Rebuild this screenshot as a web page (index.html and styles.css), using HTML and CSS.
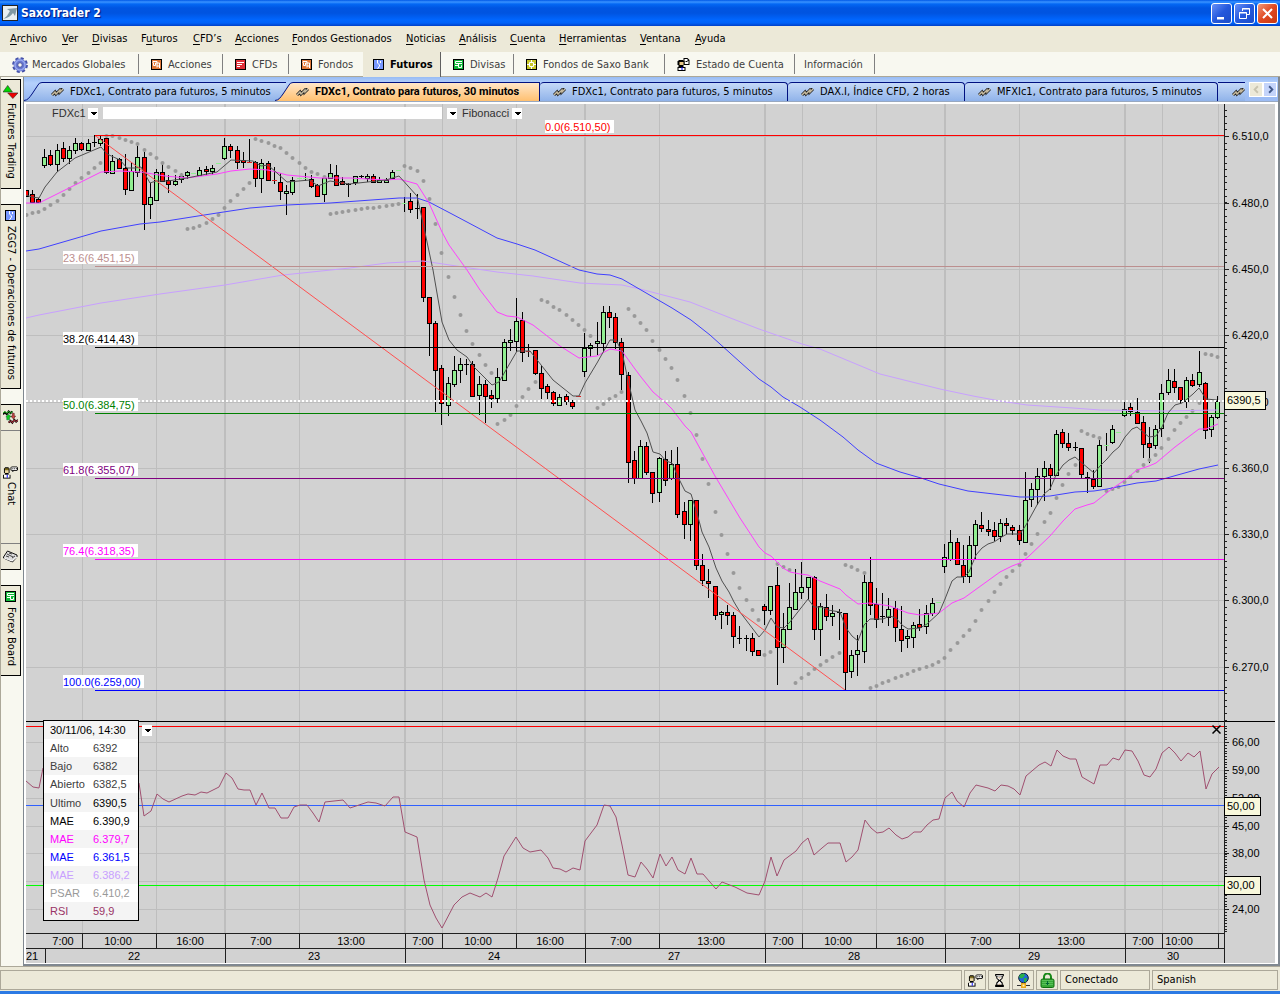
FILE: index.html
```html
<!DOCTYPE html>
<html lang="es">
<head>
<meta charset="utf-8">
<title>SaxoTrader 2</title>
<link rel="stylesheet" href="styles.css">
</head>
<body>
<svg class="defs" aria-hidden="true">
  <defs>
    <linearGradient id="tabBlue" x1="0" y1="0" x2="0" y2="1"><stop offset="0" stop-color="#c5d9f7"/><stop offset="1" stop-color="#90b3ea"/></linearGradient>
    <linearGradient id="tabOrange" x1="0" y1="0" x2="0" y2="1"><stop offset="0" stop-color="#ffe6c8"/><stop offset="1" stop-color="#ffc070"/></linearGradient>
  </defs>
  <symbol id="i-chart" viewBox="0 0 13 9"><path d="M1 7L4 4L5 6L9 2L9 4L12 1" fill="none" stroke="#222" stroke-width="3"/><path d="M1 7L4 4L5 6L9 2L9 4L12 1" fill="none" stroke="#c8bca0" stroke-width="1.4"/></symbol>
  <symbol id="i-gear" viewBox="0 0 16 16"><circle cx="8" cy="8" r="6.4" fill="none" stroke="#4450a8" stroke-width="3" stroke-dasharray="2.9 2.1"/><circle cx="8" cy="8" r="4.4" fill="none" stroke="#6878d0" stroke-width="4"/><circle cx="8" cy="8" r="5" fill="none" stroke="#98a8ee" stroke-width="1.4"/><circle cx="8" cy="8" r="2.3" fill="#f8f8f0" stroke="#3c48a0"/></symbol>
  <symbol id="i-orange" viewBox="0 0 11 11"><path d="M0 0h11v11H0z" fill="#000"/><path d="M1 1h9v9H1z" fill="#e07838"/><path d="M2 4V2.5H6V8.500M2.500 4v2.500H4.500V4H8.500V7H6M8.500 7v2" fill="none" stroke="#fff"/></symbol>
  <symbol id="i-red" viewBox="0 0 11 11"><path d="M0 0h11v11H0z" fill="#000"/><path d="M1 1h9v9H1z" fill="#e03038"/><path d="M2 3h7v1H2zM2 5h5v1H2zM2 7h3v1H2z" fill="#fff"/></symbol>
  <symbol id="i-blue" viewBox="0 0 11 11"><path d="M0 0h11v11H0z" fill="#000"/><path d="M1 1h9v9H1z" fill="#7898ff"/><path d="M4.500 1V4L6.500 6V7L4.500 10M7.500 2v2" fill="none" stroke="#fff"/></symbol>
  <symbol id="i-green" viewBox="0 0 11 11"><path d="M0 0h11v11H0z" fill="#000"/><path d="M1 1h9v9H1z" fill="#10b838"/><path d="M9 2.500H2.500V4.500H9M2 6.500H5.500V8.500H8.500V6.500H9M5.500 4v3" fill="none" stroke="#fff"/></symbol>
  <symbol id="i-yellow" viewBox="0 0 11 11"><path d="M0 0h11v11H0z" fill="#000"/><path d="M1 1h9v9H1z" fill="#c8c828"/><path d="M4 3.500H7.500V7.500H3.500V3.500zM5.500 1v2M5.500 8v2M1 5.500h2M8 5.500h2" fill="none" stroke="#fff"/></symbol>
  <symbol id="i-account" viewBox="0 0 12 13"><path d="M6 0h4l2 2v5H6z" fill="#000"/><path d="M7 1h3v2h1v3H7z" fill="#fff"/><path d="M8 3h2v1H8z" fill="#000"/><path d="M1 2h5v1h1v4H6v2H1V7H0V3h1z" fill="#000"/><path d="M2 4h4v3H2z" fill="#e8c888"/><path d="M0 9h8v4H0z" fill="#000"/><path d="M1 10h6v2H1z" fill="#fff"/><path d="M4 9h1v3H4z" fill="#00f"/></symbol>
  <symbol id="i-chat" viewBox="0 0 16 13"><path d="M9 0h6v1h1v3h-1v1h-4v1h-1V5H9V4H8V1h1z" fill="#000"/><path d="M9 1h6v3H9z" fill="#fff"/><path d="M10 2h1v1h-1zM12 2h1v1h-1zM14 2h1v1h-1z" fill="#000"/><path d="M2 1h4v1h1v5H6v2H2V7H1V2h1z" fill="#000"/><path d="M2 2h4v2H2z" fill="#807020"/><path d="M2 4h4v3H2z" fill="#ecd8a0"/><path d="M0 9h8v4H0z" fill="#000"/><path d="M1 9h6v3H1z" fill="#fff"/><path d="M4 9h1v3H4z" fill="#00f"/></symbol>
  <symbol id="i-updown" viewBox="0 0 16 15"><path d="M0 8L5 1L10 8z" fill="#00d800" stroke="#222" stroke-width=".6"/><path d="M5 9h11L10.500 15z" fill="#f00000" stroke="#222" stroke-width=".6"/></symbol>
  <symbol id="i-trade" viewBox="0 0 16 15"><path d="M0 4l2-2 2 2 2-3 2 2 2-2" fill="none" stroke="#000" stroke-width="2"/><path d="M0 3l2-2 2 2 2-2 2 2 2-2" fill="none" stroke="#2d2"/><path d="M6 13l2-2 2 2 2-3 2 2 2-2" fill="none" stroke="#000" stroke-width="2"/><path d="M6 13l2-2 2 2 2-3 2 2 2-2" fill="none" stroke="#e04050"/><path d="M4 10V7H3l3-3 3 3H7v3z" fill="#1c2" stroke="#063" stroke-width=".5"/><path d="M10 3h2v3h1.500L11 9 8.500 6H10z" fill="#c44" stroke="#300" stroke-width=".5"/></symbol>
  <symbol id="i-news" viewBox="0 0 15 13"><path d="M0.500 7L4.500 1l9.500 4v2l-4.500 5-9-4z" fill="#ddd" stroke="#111"/><path d="M4 4l6 3M3 6l3 1M6 3l3 1M9 8l3-2" stroke="#444"/><path d="M1 8l8 3 5-4" fill="none" stroke="#fff"/></symbol>
  <symbol id="i-hour" viewBox="0 0 8 12"><path d="M0 0h8v2H7v2L5 6l2 2v2h1v2H0v-2h1V8l2-2-2-2V2H0z" fill="#000"/><path d="M1 1h6v0.500H1zM2 2h4v2L4 5.500 2 4zM4 6.500L6 8.500V10H2V8.500z" fill="#fff"/><path d="M3 9h2v1H3zM3 3h2v1H3z" fill="#c8a070"/></symbol>
  <symbol id="i-net" viewBox="0 0 13 15"><circle cx="6.500" cy="5" r="4.800" fill="#2068d8" stroke="#123"/><path d="M3 1.500l4-1 1 2-3 3-3-1zM7 5l3 0-1 4-2 0z" fill="#28b048"/><path d="M0 12h13v1H0z" fill="#333"/><path d="M4 10h5v5H4z" fill="#e8a818"/><path d="M5.500 11.500h2v2h-2z" fill="#fff8c0"/></symbol>
  <symbol id="i-lock" viewBox="0 0 14 15"><path d="M3.500 7V4a3.500 3.500 0 0 1 7 0v3" fill="none" stroke="#188818" stroke-width="2"/><rect x="0.500" y="6" width="13" height="8.500" rx="1.500" fill="#38a838" stroke="#107010"/><path d="M1.500 7.500h11M1.500 9.500h11M1.500 11.500h11" stroke="#70d070" stroke-width=".6"/><path d="M6.500 8h1v4h-1zM5.500 10h3v1h-3z" fill="#063"/></symbol>
  <symbol id="i-down" viewBox="0 0 11 11"><path d="M3 4h6v1H8v1H7v1H5V6H4V5H3z" fill="#000"/></symbol>
</svg>

<header class="titlebar">
  <svg class="app-icon" width="16" height="16" viewBox="0 0 16 16"><path d="M0 0h16v16H0z" fill="#222"/><path d="M1 1h14v14H1z" fill="#e8eef2"/><path d="M1 14C5 12 6 9 8 6L5 4l10-1-2 8-2-3c-2 3-5 5-10 6z" fill="#8098a4"/></svg>
  <h1>SaxoTrader 2</h1>
  <div class="win-buttons">
    <button class="win" aria-label="Minimizar"><svg width="17" height="17" viewBox="0 0 17 17"><path d="M4 12h7v2.500H4z" fill="#fff"/></svg></button>
    <button class="win" aria-label="Restaurar"><svg width="17" height="17" viewBox="0 0 17 17"><path d="M6.500 6V3.500h7v6H11M6 4h8M3.500 7.500h7v6h-7zM3 8h8" fill="none" stroke="#fff"/></svg></button>
    <button class="win close" aria-label="Cerrar"><svg width="17" height="17" viewBox="0 0 17 17"><path d="M4 4l9 9M13 4l-9 9" stroke="#fff" stroke-width="2"/></svg></button>
  </div>
</header>

<nav class="menu">
  <button><u>A</u>rchivo</button><button><u>V</u>er</button><button><u>D</u>ivisas</button><button>F<u>u</u>turos</button><button><u>C</u>FD’s</button><button><u>A</u>cciones</button><button><u>F</u>ondos Gestionados</button><button><u>N</u>oticias</button><button><u>A</u>nálisis</button><button><u>C</u>uenta</button><button><u>H</u>erramientas</button><button><u>V</u>entana</button><button><u>A</u>yuda</button>
</nav>

<nav class="modules">
  <button><svg class="ic16"><use href="#i-gear"/></svg>Mercados Globales</button>
  <button><svg class="ic11"><use href="#i-orange"/></svg>Acciones</button>
  <button><svg class="ic11"><use href="#i-red"/></svg>CFDs</button>
  <button class="before"><svg class="ic11"><use href="#i-orange"/></svg>Fondos</button>
  <button class="on"><svg class="ic11"><use href="#i-blue"/></svg>Futuros</button>
  <button><svg class="ic11"><use href="#i-green"/></svg>Divisas</button>
  <button><svg class="ic11"><use href="#i-yellow"/></svg>Fondos de Saxo Bank</button>
  <button><svg class="ic13"><use href="#i-account"/></svg>Estado de Cuenta</button>
  <button>Información</button>
</nav>

<div class="work">
  <aside class="side">
    <button class="dock d1"><svg class="ic15"><use href="#i-updown"/></svg><span>Futures Trading</span></button>
    <button class="dock d2"><svg class="ic11"><use href="#i-blue"/></svg><span>ZGG7 - Operaciones de futuros</span></button>
    <div class="dock-group">
      <button class="small" aria-label="Operar"><svg class="ic15"><use href="#i-trade"/></svg></button>
      <button class="chat"><svg class="ic15"><use href="#i-chat"/></svg><span>Chat</span></button>
      <button class="small" aria-label="Noticias"><svg class="ic15"><use href="#i-news"/></svg></button>
    </div>
    <button class="dock d4"><svg class="ic11"><use href="#i-green"/></svg><span>Forex Board</span></button>
  </aside>

  <main class="frame">
    <div class="tabs">
      <button class="tab first"><svg class="slant" viewBox="0 0 20 19"><path d="M0 19C4 18 5 16 8 12L14 3Q15 0.500 18 0.500H20V19z" fill="url(#tabBlue)"/><path d="M0 18.500C4 18 5 16 8 12L14 3Q15 0.500 18 0.500H20" fill="none" stroke="#001080"/></svg><span class="face"><svg class="ic-chart"><use href="#i-chart"/></svg>FDXc1, Contrato para futuros, 5 minutos</span></button>
      <button class="tab on"><svg class="slant" viewBox="0 0 20 19"><path d="M0 19C4 18 5 16 8 12L14 3Q15 0.500 18 0.500H20V19z" fill="url(#tabOrange)"/><path d="M0 18.500C4 18 5 16 8 12L14 3Q15 0.500 18 0.500H20" fill="none" stroke="#001080"/></svg><span class="face"><svg class="ic-chart"><use href="#i-chart"/></svg>FDXc1, Contrato para futuros, 30 minutos</span></button>
      <button class="tab t3"><span class="face"><svg class="ic-chart"><use href="#i-chart"/></svg>FDXc1, Contrato para futuros, 5 minutos</span></button>
      <button class="tab t4"><span class="face"><svg class="ic-chart"><use href="#i-chart"/></svg>DAX.I, Índice CFD, 2 horas</span></button>
      <button class="tab t5"><span class="face"><svg class="ic-chart"><use href="#i-chart"/></svg>MFXIc1, Contrato para futuros, 5 minutos</span></button>
      <button class="tab t6" aria-label="Siguiente gráfico"><span class="face"><svg class="ic-chart"><use href="#i-chart"/></svg></span></button>
      <div class="scroll">
        <button disabled aria-label="Anterior"><svg width="13" height="13" viewBox="0 0 14 13"><path d="M8.500 3L5 6.500L8.500 10" fill="none" stroke="#c8c4b0" stroke-width="2"/></svg></button><button aria-label="Siguiente"><svg width="13" height="13" viewBox="0 0 14 13"><path d="M5.500 3L9 6.500L5.500 10" fill="none" stroke="#405888" stroke-width="2"/></svg></button>
      </div>
    </div>
    <div class="chart">
      <svg id="plot" viewBox="26 104 1249 859" role="img" aria-label="FDXc1, 30 minutos"></svg>
      <div class="tools">
        <label for="symbol">FDXc1</label>
        <button class="drop" aria-label="Elegir símbolo"><svg class="ic11"><use href="#i-down"/></svg></button>
        <input id="symbol" type="text">
        <button class="drop" aria-label="Historial"><svg class="ic11"><use href="#i-down"/></svg></button>
        <span class="study">Fibonacci</span>
        <button class="drop" aria-label="Elegir estudio"><svg class="ic11"><use href="#i-down"/></svg></button>
      </div>
      <div class="readout">
        <table>
          <thead><tr><th colspan="2">30/11/06, 14:30</th></tr></thead>
          <tbody>
            <tr><th>Alto</th><td>6392</td></tr>
            <tr><th>Bajo</th><td>6382</td></tr>
            <tr><th>Abierto</th><td>6382,5</td></tr>
            <tr class="last"><th>Ultimo</th><td class="k">6390,5</td></tr>
            <tr class="k"><th>MAE</th><td>6.390,9</td></tr>
            <tr class="magenta"><th>MAE</th><td>6.379,7</td></tr>
            <tr class="blue"><th>MAE</th><td>6.361,5</td></tr>
            <tr class="lilac"><th>MAE</th><td>6.386,2</td></tr>
            <tr class="gray"><th>PSAR</th><td>6.410,2</td></tr>
            <tr class="plum"><th>RSI</th><td>59,9</td></tr>
          </tbody>
        </table>
        <button class="drop" aria-label="Opciones"><svg class="ic11"><use href="#i-down"/></svg></button>
      </div>
      <button class="close-study" aria-label="Cerrar RSI"><svg width="9" height="9" viewBox="0 0 9 9"><path d="M0.500 0.500l8 8M8.500 0.500l-8 8" stroke="#000" stroke-width="1.500"/></svg></button>
    </div>
  </main>
</div>

<footer class="status">
  <div class="cell grow"></div>
  <div class="cell icon"><svg class="ic15"><use href="#i-chat"/></svg></div>
  <div class="cell icon"><svg class="ic13"><use href="#i-hour"/></svg></div>
  <div class="cell icon"><svg class="ic15"><use href="#i-net"/></svg></div>
  <div class="cell icon"><svg class="ic15"><use href="#i-lock"/></svg></div>
  <div class="cell link">Conectado</div>
  <div class="cell lang">Spanish</div>
</footer>
<script src="chart.js"></script>
</body>
</html>
```
FILE: styles.css
```css
* { box-sizing: border-box; }
body {
  margin: 0;
  min-height: 100vh;
  display: flex;
  flex-direction: column;
  background: #ece9d8;
  color: #000;
  font: 11px/14px "DejaVu Sans Condensed", "Noto Sans", sans-serif;
  overflow-x: hidden;
}
button {
  font: inherit;
  color: inherit;
  background: none;
  border: 0;
  padding: 0;
  margin: 0;
  white-space: nowrap;
}
svg { flex: none; }
.defs { position: absolute; width: 0; height: 0; }
.ic11 { width: 11px; height: 11px; }
.ic13 { width: 13px; height: 13px; }
.ic15 { width: 15px; height: 15px; }
.ic16 { width: 16px; height: 16px; }
.ic-chart { width: 13px; height: 9px; }

.titlebar {
  height: 26px;
  display: flex;
  align-items: center;
  gap: 3px;
  padding: 0 2px;
  background: linear-gradient(#0058e6 0, #3a93ff 2px, #0468f4 4px, #0055e2 8px, #0054e0 13px, #0066ff 20px, #0062f8 23px, #0040c8 26px);
}
.titlebar h1 {
  flex: 1;
  margin: 0;
  color: #fff;
  font: bold 12px/16px "DejaVu Sans Condensed", sans-serif;
  text-shadow: 1px 1px 1px #001880;
}
.win-buttons { display: flex; gap: 2px; }
.win {
  width: 21px;
  height: 21px;
  display: flex;
  align-items: center;
  justify-content: center;
  border: 1px solid #fff;
  border-radius: 3px;
  background: linear-gradient(135deg, #6890f8, #2458dc 50%, #1c4cc8);
}
.win.close { background: linear-gradient(135deg, #f09878, #e04820 50%, #c83810); }

.menu {
  height: 26px;
  display: grid;
  grid-template-columns: 52px 30px 49px 52px 42px 57px 114px 53px 51px 49px 81px 55px 50px;
  align-items: center;
  padding-left: 10px;
}
.menu button { text-align: left; }
.menu u { text-underline-offset: 2px; }

.modules {
  height: 25px;
  display: grid;
  grid-template-columns: 139px 84px 66px 74px 78px 73px 151px 130px 80px 1fr;
  background: #f8f8f0;
  color: #404040;
  border-bottom: 1px solid #aca899;
}
.modules button {
  position: relative;
  display: flex;
  align-items: center;
  gap: 6px;
  padding-left: 12px;
}
.modules button:first-child { gap: 4px; }
.modules button:last-child { padding-left: 9px; }
.modules button::after {
  content: "";
  position: absolute;
  right: 0;
  top: 2px;
  height: 20px;
  border-right: 1px solid #808080;
}
.modules .before::after { border-color: #f8f8f0; }
.modules .on {
  height: 25px;
  padding-left: 10px;
  background: #ece9d8;
  border-right: 1px solid #606060;
  color: #000;
  font-weight: bold;
}
.modules .on::after { display: none; }

.work {
  flex: 1;
  display: flex;
  background: #f8f8f0;
  border-bottom: 1px solid #aca899;
}
.side {
  width: 23px;
  flex: none;
  display: flex;
  flex-direction: column;
  align-items: flex-start;
  gap: 15px;
  padding-top: 2px;
  border-left: 1px solid #aca899;
}
.dock, .dock-group {
  width: 20px;
  border: solid #000;
  border-width: 1px 1px 1px 0;
  background: #ece9d8;
}
.dock, .chat {
  display: flex;
  flex-direction: column;
  align-items: center;
  gap: 5px;
  padding-top: 5px;
}
.side span { writing-mode: vertical-rl; line-height: 18px; }
.d1 { height: 110px; padding-top: 4px; gap: 4px; }
.d2 { height: 185px; }
.d4 { height: 91px; }
.dock-group { height: 166px; display: flex; flex-direction: column; }
.small { width: 19px; height: 25px; display: grid; place-items: center; }
.chat {
  width: 19px;
  flex: 1;
  padding-top: 34px;
  gap: 2px;
  border: solid #808080;
  border-width: 1px 0;
}

.frame {
  flex: 1;
  min-width: 0;
  border: solid #808890;
  border-width: 0 2px 2px 1px;
  background: #fff;
  padding: 0 3px 1px 2px;
}
.tabs {
  display: flex;
  align-items: flex-end;
  height: 25px;
  margin: 0 -3px 0 -2px;
  background: linear-gradient(#98bcf4, #b4d0fc 6px, #9cbcf4 20px);
  border-bottom: 1px solid #98a8c0;
  overflow: hidden;
}
.tab { display: flex; flex: none; height: 19px; }
.slant { width: 20px; height: 19px; margin-right: -1px; }
.face {
  flex: 1;
  min-width: 0;
  display: flex;
  align-items: center;
  gap: 6px;
  height: 19px;
  border-top: 1px solid #001080;
  background: linear-gradient(#c5d9f7, #90b3ea);
}
.tab.first { width: 262px; }
.tab.first .face { padding-left: 8px; }
.tab.on {
  width: 265px;
  margin-left: -11px;
  z-index: 1;
  font-family: Roboto, "DejaVu Sans Condensed", sans-serif;
  font-weight: bold;
}
.tab.on .face { padding-left: 2px; background: linear-gradient(#ffe6c8, #ffc070); border-right: 1px solid #001080; }
.t3 .face, .t4 .face, .t5 .face {
  padding-left: 13px;
  border-right: 1px solid #001080;
  border-radius: 4px 4px 0 0;
}
.t6 .face { padding-left: 14px; }
.t3 { width: 248px; }
.t4 { width: 177px; }
.t5 { width: 253px; }
.t6 { width: 27px; }
.scroll { flex: 1; display: flex; align-self: center; padding-left: 4px; }
.scroll button { display: grid; background: #c4d4fa; border: 1px solid #fff; height: 15px; width: 14px; overflow: hidden; }
.scroll button:disabled { background: #ece9d8; }

.chart {
  position: relative;
  border-top: 2px solid #fff;
  font: 11px/14px "Liberation Sans", Arial, sans-serif;
}
#plot {
  display: block;
  width: 100%;
  height: auto;
  background: #d2d2d2;
  font: 11px "Liberation Sans", Arial, sans-serif;
}
#plot .mid { text-anchor: middle; }
.tools {
  position: absolute;
  left: 26px;
  top: 3px;
  height: 12px;
  display: flex;
  align-items: center;
  gap: 5px;
  color: #303030;
}
.drop { width: 10px; height: 11px; display: grid; place-items: center; background: #fff; }
.tools label { width: 31px; }
.tools input {
  width: 339px;
  height: 12px;
  border: 0;
  padding: 0;
  background: #fff;
  font: inherit;
}
.study { width: 45px; }
.readout {
  position: absolute;
  left: 17px;
  top: 616px;
  display: flex;
  align-items: flex-start;
  gap: 3px;
}
.readout .drop { margin-top: 5px; }
.readout table {
  width: 96px;
  border: 1px solid #000;
  border-collapse: separate;
  border-spacing: 0;
  background: #fff;
  color: #404040;
}
.readout tr { height: 18px; }
.readout thead tr { color: #000; }
.readout .last { height: 19px; }
.readout th, .readout td { padding: 0; font-weight: normal; text-align: left; }
.readout th { padding-left: 6px; width: 49px; }
.readout thead tr, .readout tbody tr:nth-child(even) { background: #f4f4f4; }
.readout .k { color: #000; }
.readout .magenta { color: #f0f; }
.readout .blue { color: #00f; }
.readout .lilac { color: #c8a0ff; }
.readout .gray { color: #999; }
.readout .plum { color: #993366; }
.close-study { position: absolute; right: 54px; top: 621px; display: grid; }

.status {
  display: flex;
  gap: 2px;
  padding: 3px 2px 1px 0;
  border-bottom: 4px solid #2c7ae4;
}
.cell {
  height: 20px;
  border: 1px solid #aca899;
  display: flex;
  align-items: center;
  padding-left: 4px;
}
.grow { flex: 1; }
.icon { width: 22px; padding: 0; justify-content: center; }
.link { width: 90px; }
.lang { width: 126px; }
```
FILE: chart.js
```javascript
const NS = 'http://www.w3.org/2000/svg';
const plot = document.getElementById('plot');
const RIGHT = 1224;

function add(tag, attrs, text) {
  const el = document.createElementNS(NS, tag);
  for (const name in attrs) el.setAttribute(name, attrs[name]);
  if (text) el.textContent = text;
  plot.appendChild(el);
}
const rect = (x, y, width, height, fill) => add('rect', { x, y, width, height, fill });
const line = (points, stroke) => add('polyline', { points, stroke, fill: 'none', 'stroke-width': 1 });
const label = (x, y, s, fill = '#000', cls = '') => add('text', { x, y, fill, class: cls }, s);

// One slot per half-hour bar.
const barX = k => Math.floor(44.7 + 6.207 * k);

// Grid
const priceRows = [136, 203, 269, 335, 402, 468, 534, 600, 667];
const rsiRows = [742, 770, 798, 826, 853, 881, 909];
priceRows.concat(rsiRows).forEach(y => rect(26, y, RIGHT - 26, 1, '#bebebe'));
const hours = [82, 156, 225, 299, 405, 442, 516, 585, 659, 765, 802, 876, 945, 1019, 1125, 1162, 1218];
const days = [45, 225, 405, 585, 765, 945, 1125];
hours.forEach(x => days.includes(x) ? rect(x - 1, 104, 2, 829, '#bebebe') : rect(x, 104, 1, 829, '#bebebe'));

// Bars: high, body top, body bottom, low, kind.
// g/r = rising/falling body, d = doji, G/R = flat tick.
const bars = {
  '-3': [[190,190,196,196,'r'],[190,194,202,202,'r'],[198,199,202,203,'r']],
  0: [[149,157,165,168,'g'],[150,155,164,166,'r'],[144,150,164,172,'g'],[142,148,158,162,'r'],[146,150,158,164,'g'],[138,143,150,154,'g'],[142,143,149,151,'r'],[139,143,150,151,'g'],[135,142,143,147,'d'],[136,139,143,146,'g'],[137,138,172,174,'r'],[155,161,173,173,'g'],[158,159,168,169,'r'],[154,168,189,195,'r'],[162,171,190,190,'g'],[146,157,172,177,'g'],[152,157,204,230,'r'],[183,197,204,219,'g'],[169,172,200,201,'g'],[164,172,181,181,'r'],[175,180,184,193,'r'],[175,181,184,186,'g'],[173,176,179,183,'g'],[171,172,175,179,'g'],[173,173,173,173,'G'],[167,170,175,175,'g'],[166,169,171,175,'r'],[165,168,171,175,'g'],[163,163,163,163,'G']],
  29: [[138,146,158,160,'g'],[144,146,150,158,'r'],[146,150,162,169,'r'],[152,160,162,168,'r'],[139,162,162,162,'R'],[161,162,178,187,'r'],[159,163,178,193,'g'],[161,163,180,181,'r'],[167,180,180,184,'R'],[173,182,191,200,'r'],[185,191,193,215,'g'],[177,180,192,195,'g'],[178,178,178,178,'G'],[173,178,178,181,'G'],[175,179,186,188,'r'],[184,185,196,196,'r'],[176,178,194,202,'g'],[164,173,178,178,'g'],[165,175,185,185,'r'],[177,181,184,185,'r'],[183,184,184,197,'d'],[176,176,182,185,'g'],[175,176,176,178,'d'],[174,176,178,182,'g'],[174,176,182,183,'r'],[177,180,182,183,'g'],[178,180,182,182,'g'],[170,172,178,178,'g'],[170,170,170,170,'G']],
  58: [[197,203,203,212,'G'],[193,201,209,213,'r'],[194,208,208,219,'d'],[207,207,297,302,'r'],[297,297,323,356,'r'],[321,323,370,412,'r'],[365,368,403,425,'r'],[377,383,405,416,'g'],[356,370,384,387,'g'],[358,364,370,383,'g'],[359,364,364,375,'d'],[361,364,396,397,'r'],[376,384,395,415,'g'],[380,384,396,423,'r'],[390,395,398,408,'r'],[368,377,398,403,'g'],[339,342,380,381,'g'],[329,340,342,351,'g'],[298,321,341,352,'g'],[312,320,352,362,'r'],[344,351,351,357,'R'],[350,350,373,375,'r'],[365,373,388,399,'r'],[384,386,392,399,'r'],[391,392,403,406,'r'],[394,397,405,406,'g'],[394,396,401,405,'r'],[400,402,406,409,'r'],[396,396,396,396,'R']],
  87: [[333,348,371,377,'g'],[343,345,348,357,'g'],[322,341,343,355,'g'],[306,312,343,352,'g'],[306,312,317,328,'r'],[313,317,342,349,'r'],[338,342,374,390,'r'],[372,375,462,483,'r'],[451,460,478,484,'r'],[440,446,478,478,'g'],[442,446,472,475,'r'],[472,472,493,503,'r'],[457,458,492,502,'g'],[451,459,480,486,'r'],[450,464,478,480,'g'],[447,464,514,518,'r'],[502,511,524,539,'r'],[500,500,524,541,'g'],[500,500,565,570,'r'],[554,565,580,586,'r'],[569,581,583,598,'r'],[586,586,615,620,'r'],[611,612,614,629,'g'],[605,612,615,625,'r'],[612,615,636,648,'r'],[626,638,639,644,'d'],[635,638,639,651,'d'],[633,638,651,656,'r'],[650,650,655,656,'r']],
  116: [[604,606,610,625,'r'],[586,586,610,615,'g'],[567,585,647,685,'r'],[613,629,647,663,'g'],[583,607,629,630,'g'],[569,592,609,610,'g'],[562,587,592,599,'g'],[577,577,587,599,'g'],[576,577,629,640,'r'],[603,606,629,656,'g'],[594,607,616,621,'r'],[605,613,616,626,'g'],[609,612,613,640,'d'],[613,613,672,690,'r'],[650,655,671,678,'g'],[635,650,654,676,'g'],[575,582,651,663,'g'],[557,582,605,615,'r'],[588,604,619,628,'r'],[593,616,617,623,'d'],[598,609,617,626,'g'],[601,608,627,642,'r'],[606,629,640,652,'r'],[630,636,638,648,'g'],[622,625,637,648,'g'],[609,624,627,631,'r'],[605,613,626,634,'g'],[598,603,613,616,'g'],[602,602,602,602,'G']],
  145: [[544,557,566,573,'g'],[530,542,559,561,'g'],[538,542,564,565,'r'],[545,565,576,583,'r'],[536,545,576,583,'g'],[520,524,545,559,'g'],[512,525,528,532,'r'],[520,529,531,536,'r'],[522,530,536,541,'r'],[519,523,536,542,'g'],[518,523,525,534,'r'],[525,527,530,535,'r'],[525,530,540,545,'r'],[472,500,542,543,'g'],[483,489,499,507,'g'],[468,476,489,505,'g'],[461,468,476,501,'g'],[464,468,475,490,'r'],[430,434,475,476,'g'],[429,432,443,448,'r'],[433,443,447,451,'r'],[442,447,448,451,'d'],[448,448,474,479,'r'],[472,477,478,493,'d'],[470,479,486,489,'r'],[440,445,486,487,'g'],[433,445,445,451,'G'],[425,429,442,444,'g'],[432,432,432,432,'G']],
  174: [[402,409,415,417,'g'],[403,407,411,416,'r'],[398,412,423,424,'r'],[416,422,444,458,'r'],[427,443,447,463,'r'],[425,429,445,449,'g'],[384,393,428,437,'g'],[369,380,392,395,'g'],[369,381,387,393,'r'],[387,387,400,404,'r'],[377,380,401,408,'g'],[374,380,385,387,'r'],[351,372,384,387,'g'],[382,383,430,439,'r'],[415,417,429,437,'g'],[396,401,417,419,'g']]
};
for (const start in bars) {
  bars[start].forEach(([hi, top, bottom, low, kind], i) => {
    const x = barX(Number(start) + i);
    if (low > hi) rect(x, hi, 1, low - hi, '#000');
    if (kind === 'g' || kind === 'r') {
      rect(x - 2, top, 5, bottom - top + 1, '#000');
      rect(x - 1, top + 1, 3, Math.max(1, bottom - top - 1), kind === 'g' ? '#90ee90' : '#f00');
    } else if (kind === 'd') {
      rect(x - 2, top, 5, Math.max(1, bottom - top), '#000');
    } else {
      rect(x - 2, top, 5, 1, kind === 'G' ? '#90ee90' : '#e02020');
    }
  });
}

// Parabolic SAR runs
const sar = {
  '-3': [215,213,212,209,205,201,195,189,183,178,173,168,163],
  10: [136,136,138,140,142,144,150,154,158,163,167,171,175],
  23: [229,228,226,223,219,215,208,201,195,189,183],
  34: [139,141,143,146,148,153,158,163,168,172,174,177],
  46: [214,213,212,211,210,209,208,208,207,206,205,204],
  58: [166,168,171,181,199,224,253,277,297,315,331,344,355,365,373],
  73: [424,420,415,406,397,389,382],
  80: [300,302,307,310,315,320,325,330,336],
  89: [408,404,399,396,392],
  94: [309,316,323,330,341,350,359,368,380,396,413,435,459,484,512,535,554,573,588,600,610,620],
  116: [655,652],
  118: [564,567,570],
  121: [683,678,674,669,665,661,657,653],
  129: [565,567,570,573],
  133: [688,686,683,681,678,676,674,671,669,667,665,662,658,650,643,636,630,621,610,601,592,584,577,571,565,554,544,534,522,513,498,485,474,465],
  167: [431,434,436,438],
  171: [491,489,487,482,477,471,465,460,455,448,439,430,423,417,411,403],
  187: [354,355,357]
};
for (const start in sar) {
  sar[start].forEach((y, i) => add('circle', { cx: barX(Number(start) + i) + 0.5, cy: y, r: 2, fill: '#999' }));
}

// Moving averages
line('26,318 39,315 101,303 160,294 225,285 283,275 350,268 387,263 423,261 443,264 497,272 533,276 580,283 622,285 640,289 690,302 733,319 759,329 802,344 820,349 880,374 940,389 973,396 1000,401 1027,405 1073,408 1100,410 1163,411 1218,410', '#c8a0ff');
line('26,251 39,249 101,231 140,224 160,222 217,213 250,208 287,205 330,203 399,198 417,198 429,202 450,213 467,222 497,238 517,244 535,250 579,270 597,274 610,275 622,279 641,290 672,308 691,320 710,335 740,362 759,379 771,387 783,397 800,407 820,420 843,437 858,450 876,463 900,472 921,478 939,484 968,491 1020,497 1032,497 1050,496 1075,492 1094,491 1107,489 1137,483 1156,481 1199,469 1218,465', '#4040ff');
line('26,203 39,203 101,172 120,171 141,172 165,176 187,178 217,174 231,171 250,169 268,170 287,175 320,178 350,178 386,180 399,179 417,184 429,203 442,232 449,245 467,270 480,290 497,312 507,316 517,317 533,325 560,346 579,358 597,356 610,349 622,351 635,369 641,377 653,392 666,403 672,409 685,426 691,432 703,454 715,476 740,518 759,547 765,553 771,556 783,568 790,572 800,574 808,575 820,581 840,589 846,595 858,604 870,603 890,606 908,613 920,615 939,613 952,603 964,598 982,585 1000,572 1012,566 1020,563 1028,557 1050,536 1063,521 1075,509 1087,505 1094,503 1113,488 1125,480 1137,470 1149,466 1156,463 1175,447 1187,438 1199,429 1206,429 1218,424', '#ff40ff');
line('26,195 32,197 39,198 45,187 57,172 75,158 101,147 107,154 120,160 127,168 135,168 141,167 150,183 156,181 168,181 187,178 217,172 231,160 253,161 261,166 268,165 287,182 310,180 318,186 330,181 349,184 386,180 399,176 417,196 423,223 433,270 442,322 449,340 457,350 467,357 474,367 492,385 499,382 517,351 530,351 553,380 573,396 579,396 585,383 597,363 610,340 616,340 622,352 628,380 635,410 641,421 647,433 653,452 660,454 666,461 672,463 678,477 685,491 691,494 697,513 702,532 709,547 716,568 722,581 729,592 734,602 740,612 759,637 765,630 771,618 777,627 784,628 790,622 808,599 814,607 822,607 828,610 840,612 846,628 852,636 858,641 864,625 870,619 883,619 890,616 896,618 902,625 908,629 920,628 927,624 939,613 945,599 952,581 957,577 964,577 969,572 976,555 982,548 988,544 994,542 1000,538 1007,534 1020,534 1026,525 1037,505 1044,494 1050,489 1056,475 1063,465 1069,460 1075,457 1082,463 1094,473 1100,466 1107,459 1113,452 1119,447 1125,437 1132,429 1137,427 1143,432 1149,437 1156,436 1162,427 1168,413 1175,405 1182,403 1187,399 1193,394 1199,388 1206,399 1217,400', '#505050');

// Fibonacci retracement
line('95,135.5 845,690', '#ff5050');
const fib = [
  [135, '#f00', '0.0(6.510,50)', 545, 69],
  [266, '#bc8f8f', '23.6(6.451,15)', 63, 75],
  [347, '#000', '38.2(6.414,43)', 63, 75],
  [413, '#008000', '50.0(6.384,75)', 63, 75],
  [478, '#800080', '61.8(6.355,07)', 63, 75],
  [559, '#f0f', '76.4(6.318,35)', 63, 75],
  [690, '#00f', '100.0(6.259,00)', 63, 81]
];
add('line', { x1: 26, x2: RIGHT, y1: 401, y2: 401, stroke: '#fff', 'stroke-width': 2, 'stroke-dasharray': '2 2' });
fib.forEach(([y, color, text, x, w]) => {
  rect(95, y, RIGHT - 95, 1, color);
  const top = x === 545 ? 120 : y - 15;
  rect(x, top, w, 13, '#fff');
  label(x, top + 11, text, color);
});

// RSI pane
rect(26, 805, RIGHT - 26, 1, '#3060ff');
rect(26, 885, RIGHT - 26, 1, '#0f0');
line('26,781 33,787 39,788 43,768 139,783 144,816 151,811 157,794 163,799 169,802 182,796 188,794 195,795 201,792 207,793 213,790 219,787 226,773 232,778 238,789 244,790 250,790 256,805 262,793 269,808 275,808 281,818 288,818 294,807 300,805 307,805 313,813 319,822 325,802 343,800 350,808 368,802 376,803 385,806 393,797 399,797 405,832 417,837 424,880 430,905 436,918 442,928 454,905 462,897 470,893 480,897 486,893 492,897 498,878 504,856 516,837 523,848 530,852 541,850 548,858 553,868 560,869 566,872 573,868 580,870 585,841 597,825 604,805 610,806 616,817 622,845 628,875 635,877 641,862 647,869 653,878 660,854 666,866 672,857 678,870 685,874 691,858 697,874 703,874 716,889 722,882 735,887 747,893 759,895 765,881 771,857 777,876 784,860 796,851 802,843 808,838 814,855 822,848 828,843 840,843 846,862 852,857 858,850 865,820 871,828 877,833 883,832 889,828 896,835 902,839 908,837 914,832 921,832 927,825 933,820 939,819 945,798 952,792 957,801 964,807 970,793 976,785 988,788 995,791 1001,785 1008,786 1014,789 1020,795 1026,776 1039,765 1045,762 1051,766 1057,750 1063,756 1070,759 1076,759 1082,777 1094,784 1100,765 1107,765 1113,758 1119,760 1125,750 1132,751 1138,761 1144,775 1150,777 1156,769 1162,753 1169,747 1175,753 1181,761 1188,753 1194,757 1200,751 1206,789 1212,774 1219,767', '#a05070');
rect(26, 721, 1249, 1, '#000');
rect(26, 726, RIGHT - 25, 1, '#f00');

// Value axis
rect(RIGHT, 104, 1, 859, '#202020');
for (let y = 109.5; y < 720; y += 6.633) rect(RIGHT, Math.round(y), 3, 1, '#202020');
for (let y = 725.5; y < 932; y += 2.783) rect(RIGHT, Math.round(y), 3, 1, '#202020');
['6.510,0', '6.480,0', '6.450,0', '6.420,0', '6.390,0', '6.360,0', '6.330,0', '6.300,0', '6.270,0'].forEach((s, i) => {
  rect(RIGHT, priceRows[i], 5, 1, '#202020');
  label(1232, priceRows[i] + 4, s);
});
['66,00', '59,00', '52,00', '45,00', '38,00', '31,00', '24,00'].forEach((s, i) => {
  rect(RIGHT, rsiRows[i], 5, 1, '#202020');
  if (s !== '31,00') label(1232, rsiRows[i] + 4, s);
});
[[391, 41, '6390,5'], [797, 36, '50,00'], [876, 36, '30,00']].forEach(([y, w, s]) => {
  rect(RIGHT, y, w + 1, 19, '#000');
  rect(RIGHT + 1, y + 1, w - 1, 17, '#f8f8dc');
  label(1227, y + 13, s);
});

// Time axis
rect(26, 933, RIGHT - 26, 1, '#202020');
rect(26, 948, RIGHT - 26, 1, '#202020');
hours.forEach(x => rect(x, 934, 1, 14, '#202020'));
days.forEach(x => rect(x, 949, 1, 14, '#202020'));
[[63, '7:00'], [118, '10:00'], [190, '16:00'], [261, '7:00'], [351, '13:00'], [423, '7:00'], [478, '10:00'], [550, '16:00'], [621, '7:00'], [711, '13:00'], [783, '7:00'], [838, '10:00'], [910, '16:00'], [981, '7:00'], [1071, '13:00'], [1143, '7:00'], [1179, '10:00']]
  .forEach(([x, s]) => label(x, 945, s, '#000', 'mid'));
[[32, '21'], [134, '22'], [314, '23'], [494, '24'], [674, '27'], [854, '28'], [1034, '29'], [1173, '30']]
  .forEach(([x, s]) => label(x, 960, s, '#000', 'mid'));
```
